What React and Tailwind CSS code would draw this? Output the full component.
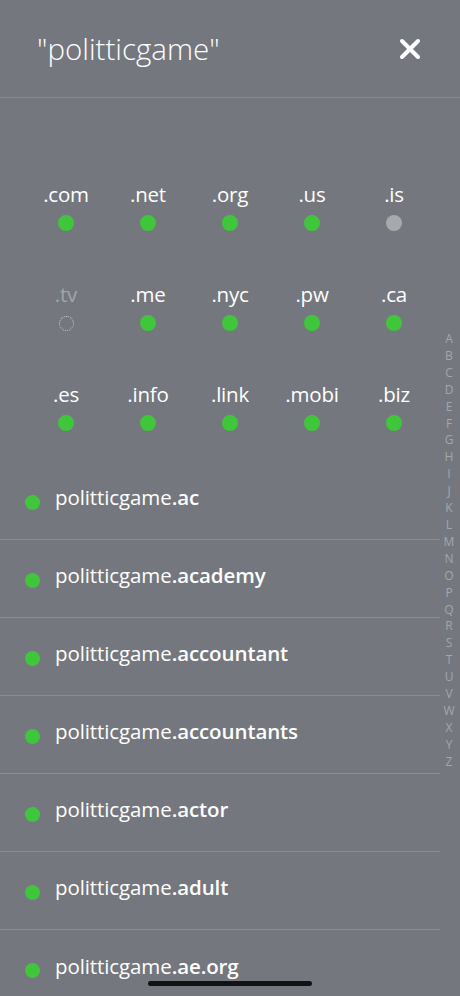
import React from 'react';

const GREEN = 'bg-[#3fc63a]';

const tlds = [
  { name: '.com', state: 'free' },
  { name: '.net', state: 'free' },
  { name: '.org', state: 'free' },
  { name: '.us', state: 'free' },
  { name: '.is', state: 'taken' },
  { name: '.tv', state: 'pending' },
  { name: '.me', state: 'free' },
  { name: '.nyc', state: 'free' },
  { name: '.pw', state: 'free' },
  { name: '.ca', state: 'free' },
  { name: '.es', state: 'free' },
  { name: '.info', state: 'free' },
  { name: '.link', state: 'free' },
  { name: '.mobi', state: 'free' },
  { name: '.biz', state: 'free' },
];

const results = ['.ac', '.academy', '.accountant', '.accountants', '.actor', '.adult', '.ae.org'];

const letters = 'ABCDEFGHIJKLMNOPQRSTUVWXYZ'.split('');

const Dot = ({ state }) => {
  if (state === 'pending') {
    return <div className="w-[15px] h-[15px] rounded-full border border-dotted border-[#c9cbce]" />;
  }
  if (state === 'taken') {
    return <div className="w-[16px] h-[16px] rounded-full bg-[#a7a9ac]" />;
  }
  return <div className={`w-[16px] h-[16px] rounded-full ${GREEN}`} />;
};

const App = () => {
  return (
    <div
      className="relative w-[460px] h-[996px] overflow-hidden bg-[#74787e] text-white"
      style={{ fontFamily: '"Open Sans", Lato, sans-serif' }}
    >
      <header className="h-[98px] flex items-center justify-between pl-[37px] pr-[38px] border-b border-[#868a90]">
        <h1 className="text-[29.5px] font-light mt-[2px]">"politticgame"</h1>
        <svg width="22" height="22" viewBox="0 0 22 22" className="mr-[1px]">
          <path d="M3 3 L19 19 M19 3 L3 19" stroke="white" strokeWidth="4" strokeLinecap="round" />
        </svg>
      </header>

      <div className="pt-[84px] px-[25px] grid grid-cols-5 gap-y-[51px]">
        {tlds.map((t) => (
          <div key={t.name} className="flex flex-col items-center">
            <span
              className={`text-[20.5px] leading-[25px] font-medium tracking-[-0.2px] ${
                t.state === 'pending' ? 'text-[#a2a5aa]' : 'text-white'
              }`}
            >
              {t.name}
            </span>
            <div className="mt-[8px] h-[16px] flex items-center justify-center">
              <Dot state={t.state} />
            </div>
          </div>
        ))}
      </div>

      <div className="mt-[31px] w-[440px]">
        {results.map((r, i) => (
          <div
            key={r}
            className={`h-[78px] flex items-center ${i < results.length - 1 ? 'border-b border-[#888c92]' : ''}`}
          >
            <div className={`ml-[25px] mt-[3px] w-[15px] h-[15px] rounded-full ${GREEN}`} />
            <span className="ml-[15px] mb-[7px] text-[20.5px] leading-[26px] tracking-[-0.1px]">
              <span className="font-normal">politticgame</span>
              <span className="font-semibold">{r}</span>
            </span>
          </div>
        ))}
      </div>

      <div className="absolute right-[4px] top-[331px] w-[14px] flex flex-col items-center">
        {letters.map((l) => (
          <span key={l} className="text-[12px] leading-[16.9px] text-[#a3a6ab]">
            {l}
          </span>
        ))}
      </div>

      <div className="absolute bottom-[10px] left-[148px] w-[164px] h-[5px] rounded-full bg-[#111214]" />
    </div>
  );
};

export default App;
